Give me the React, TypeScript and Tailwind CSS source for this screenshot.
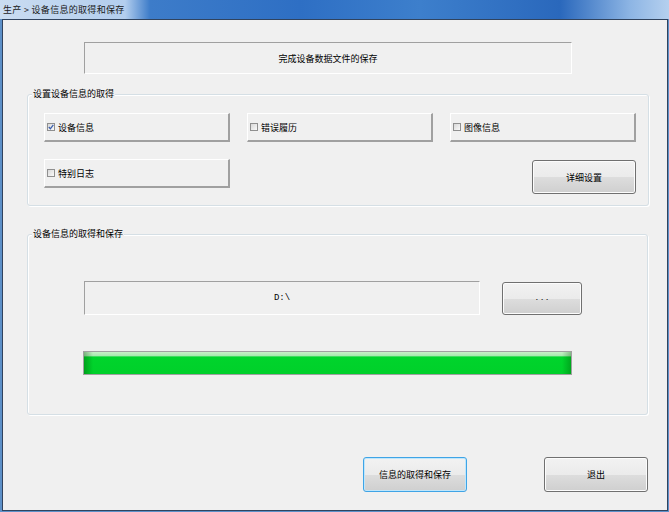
import { ReactNode } from "react";

const font = "font-['SimSun','Noto_Sans_CJK_SC',sans-serif]";

function CheckButton({ label, checked }: { label: string; checked?: boolean }) {
  return (
    <div className="w-[186px] h-[29px] flex items-center pl-[2px] gap-[3px] border-t border-l border-white border-r-2 border-b-2 border-r-[#a0a0a0] border-b-[#a0a0a0] bg-[#f0f0f0]">
      <div className="w-[8px] h-[8px] border border-[#8f8f8f] bg-[linear-gradient(135deg,#d8d8d8,#fafafa)] flex items-center justify-center">
        {checked && (
          <svg width="6" height="6" viewBox="0 0 6 6">
            <path d="M0.8 3 L2.4 4.8 L5.3 0.9" stroke="#3b5fae" strokeWidth="1.3" fill="none" />
          </svg>
        )}
      </div>
      <span className="text-[9px] leading-none text-black">{label}</span>
    </div>
  );
}

function WinButton({ children, w, h, focused }: { children: ReactNode; w: string; h: string; focused?: boolean }) {
  return (
    <div
      className={`${w} ${h} rounded-[3px] border flex items-center justify-center text-[9px] leading-none text-black bg-[linear-gradient(to_bottom,#f2f2f2_0%,#ebebeb_50%,#dddddd_51%,#cfcfcf_100%)] ${
        focused
          ? "border-[#3fa4e6] shadow-[inset_0_0_0_1px_#bfe6fb]"
          : "border-[#707070] shadow-[inset_0_0_0_1px_#fcfcfc]"
      }`}
    >
      {children}
    </div>
  );
}

function Group({ title, className, children }: { title: string; className: string; children: ReactNode }) {
  return (
    <div className={`relative rounded-[3px] border border-[#d5dfe5] shadow-[inset_1px_1px_0_#ffffff,1px_1px_0_#ffffff] ${className}`}>
      <span className="absolute left-[4px] top-[-7px] bg-[#f0f0f0] px-[1px] text-[9px] leading-[12px] text-black">
        {title}
      </span>
      {children}
    </div>
  );
}

export default function App() {
  return (
    <div className={`w-[669px] h-[512px] flex flex-col bg-[#5d90c8] ${font}`}>
      <div className="h-[19px] flex items-center pl-[3px] bg-[linear-gradient(to_right,#cadcf1_0px,#b3ceee_125px,#3d7cc9_150px,#2e6fc4_300px,#3d7fcc_420px,#2a68bc_560px,#8db5e4_630px,#b5d0ef_669px)]">
        <span className="text-[9px] leading-none tracking-[0.3px] text-[#1a1a1a]">生产 &gt; 设备信息的取得和保存</span>
      </div>
      <div className="ml-[2px] w-[666px] h-[492px] border border-[#30435e] bg-[#f0f0f0] flex flex-col">
        <div className="mt-[22px] ml-[81px] w-[488px] h-[32px] border-t border-l border-[#a0a0a0] border-b border-r border-b-white border-r-white flex items-center justify-center text-[9px] leading-none text-black">
          完成设备数据文件的保存
        </div>

        <Group title="设置设备信息的取得" className="mt-[20px] ml-[24px] w-[622px] h-[112px] pt-[18px] pl-[16px]">
          <div className="flex gap-[17px]">
            <CheckButton label="设备信息" checked />
            <CheckButton label="错误履历" />
            <CheckButton label="图像信息" />
          </div>
          <div className="mt-[17px] w-[592px] flex items-start justify-between">
            <CheckButton label="特别日志" />
            <div className="mt-[1px]">
              <WinButton w="w-[104px]" h="h-[34px]">详细设置</WinButton>
            </div>
          </div>
        </Group>

        <Group title="设备信息的取得和保存" className="mt-[28px] ml-[24px] w-[621px] h-[181px] pt-[46px]">
          <div className="ml-[56px] flex items-start gap-[22px]">
            <div className="w-[396px] h-[34px] border-t border-l border-[#a0a0a0] border-b border-r border-b-white border-r-white flex items-center justify-center font-['Liberation_Mono',monospace] text-[9px] leading-none text-black">
              D:\
            </div>
            <div className="mt-[1px]">
              <WinButton w="w-[80px]" h="h-[33px]">
                <span className="tracking-[3px] pl-[3px] pb-[3px] text-[8px]">...</span>
              </WinButton>
            </div>
          </div>
          <div className="mt-[36px] ml-[55px] w-[489px] h-[24px] border border-[#a0a0a0] bg-[linear-gradient(to_right,rgba(0,70,0,0.35),transparent_9px,transparent_calc(100%-9px),rgba(0,70,0,0.3)),linear-gradient(to_bottom,#c8f0c8_0%,#a6e8ae_18%,#00d42c_22%,#00d02a_100%)]" />
        </Group>

        <div className="mt-[42px] ml-[360px] flex gap-[77px]">
          <WinButton w="w-[104px]" h="h-[35px]" focused>信息的取得和保存</WinButton>
          <WinButton w="w-[104px]" h="h-[35px]">退出</WinButton>
        </div>
      </div>
    </div>
  );
}
